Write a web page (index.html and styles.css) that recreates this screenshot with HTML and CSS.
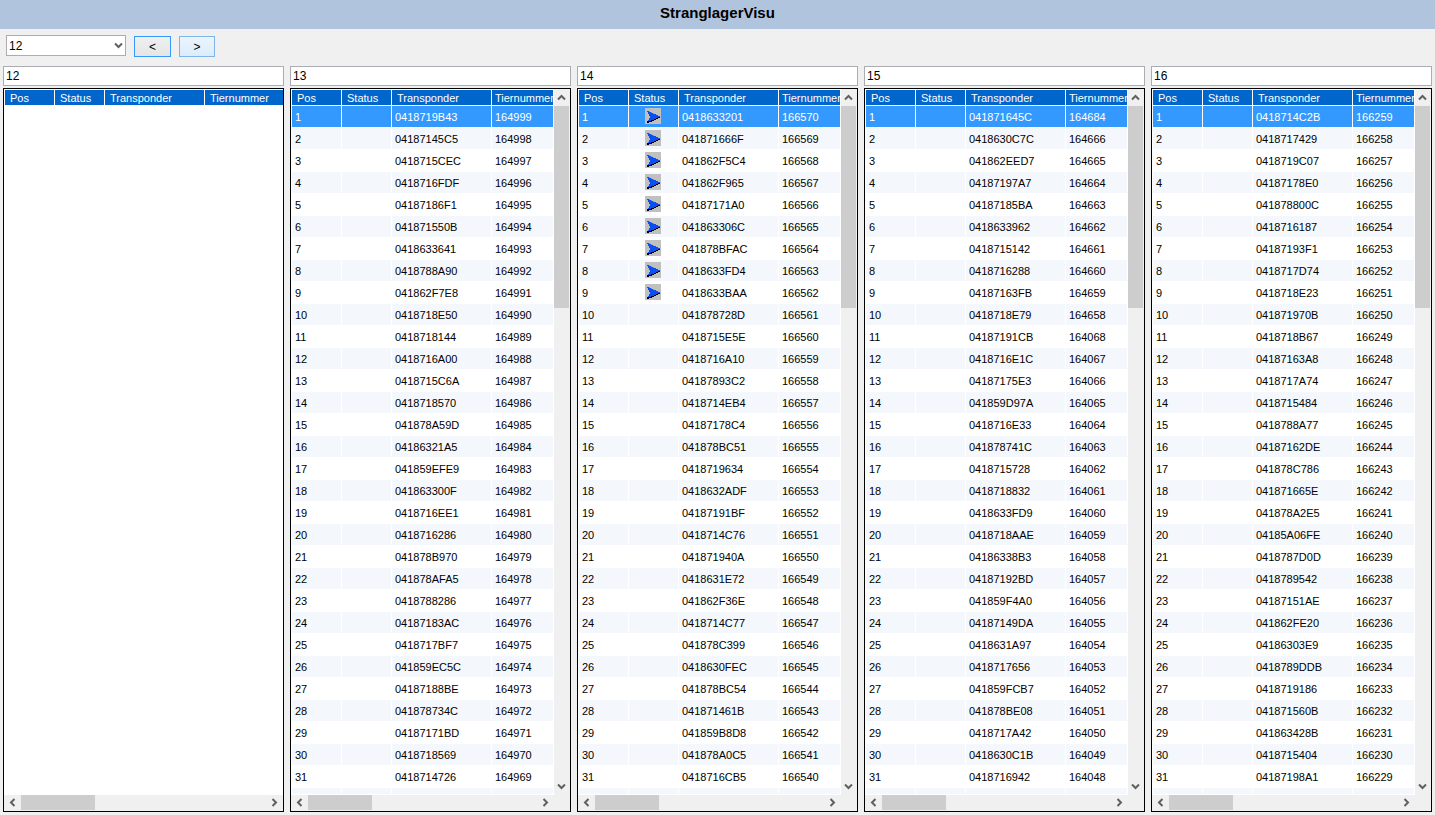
FILE: index.html
```html
<!DOCTYPE html>
<html lang="de">
<head>
<meta charset="utf-8">
<title>StranglagerVisu</title>
<link rel="stylesheet" href="styles.css">
</head>
<body>
<svg class="symbols" aria-hidden="true">
  <symbol id="up" viewBox="0 0 9 9"><path d="M1 6.5 4.5 3 8 6.5" fill="none" stroke="#606060" stroke-width="2"/></symbol>
  <symbol id="down" viewBox="0 0 9 9"><path d="M1 2.5 4.5 6 8 2.5" fill="none" stroke="#606060" stroke-width="2"/></symbol>
  <symbol id="left" viewBox="0 0 9 9"><path d="M6.5 1 3 4.5 6.5 8" fill="none" stroke="#606060" stroke-width="2"/></symbol>
  <symbol id="right" viewBox="0 0 9 9"><path d="M2.5 1 6 4.5 2.5 8" fill="none" stroke="#606060" stroke-width="2"/></symbol>
  <symbol id="arrow" viewBox="0 0 16 16">
    <path d="M0 0H16V16H0Z" fill="#c0c0c0"/>
    <path d="M2 3V4H3V6H4V8H5V10H4V12H3V13H2V15H4V14H7V13H9V12H11V11H13V10H15V9L3 3Z" fill="#000"/>
    <path d="M2 3H4V4H6V5H8V6H11V7H13V8H15V9H13V10H11V11H9V12H6V13H3V12H4V10H5V8H4V6H3V4H2Z" fill="#0a50f0"/>
  </symbol>
</svg>
<div class="app">
  <header class="titlebar"><h1 class="title">StranglagerVisu</h1></header>
  <nav class="toolbar">
    <div class="combo">
      <select class="combo-select" aria-label="Strang"><option>12</option><option>13</option><option>14</option><option>15</option><option>16</option></select>
      <svg class="combo-icon" aria-hidden="true"><use href="#down"/></svg>
    </div>
    <button class="step step-focus" type="button" aria-label="Zurück">&lt;</button>
    <button class="step step-hover" type="button" aria-label="Weiter">&gt;</button>
  </nav>
  <main class="lanes" id="lanes"></main>
</div>
<script src="app.js"></script>
</body>
</html>
```
FILE: styles.css
```css
* { box-sizing: border-box; }

body {
  margin: 0;
  background: #f0f0f0;
  color: #000;
  font-family: "Liberation Sans", Arial, sans-serif;
  font-size: 11px;
}

button, input, select { font: inherit; color: inherit; border-radius: 0; }

.symbols { display: none; }

.app { display: flex; flex-direction: column; height: 100vh; }

.titlebar { background: #b0c4de; padding-bottom: 3px; }
.title {
  margin: 0;
  font: bold 15px/26px "Liberation Sans", Arial, sans-serif;
  text-align: center;
}

.toolbar { display: flex; align-items: flex-end; gap: 8px; padding: 6px 6px 9px; }

.combo { display: grid; width: 120px; height: 22px; padding-bottom: 1px; }
.combo-select {
  grid-area: 1 / 1;
  appearance: none;
  width: 100%;
  height: 21px;
  padding: 0 2px;
  border: 1px solid #abadb3;
  background: #fff;
}
.combo-icon {
  grid-area: 1 / 1;
  place-self: center end;
  width: 9px;
  height: 9px;
  margin-right: 3px;
  pointer-events: none;
}

.step { width: 37px; height: 21px; padding: 0; border: 1px solid #39f; }
.step-focus { background: linear-gradient(#f0f0f0, #e5e5e5); }
.step-hover { width: 36px; border-color: #7eb4ea; background: linear-gradient(#ecf4fc, #dcecfc); }

.lanes {
  flex: 1;
  min-height: 0;
  display: grid;
  grid-template-columns: repeat(5, minmax(0, 1fr));
  grid-template-rows: minmax(0, 1fr);
  gap: 6px;
  padding: 0 3px 3px;
}

.lane { display: flex; flex-direction: column; gap: 2px; min-height: 0; }
.lane-name {
  width: 100%;
  height: 20px;
  padding: 0 2px;
  border: 1px solid #abadb3;
  background: #fff;
}
.combo-select, .lane-name, .step { font-size: 12px; }

.list {
  flex: 1;
  min-height: 0;
  display: grid;
  grid-template-columns: minmax(0, 1fr) auto;
  grid-template-rows: minmax(0, 1fr) 16px;
  border: 1px solid #000;
  background: #fff;
}

.view { overflow: hidden; padding: 1px 0 0 1px; border-bottom: 1px solid #fff; }

.table { width: 100%; table-layout: fixed; border-spacing: 0; }
.col-small { width: 50px; }
.col-wide { width: 100px; }
.table th, .table td {
  white-space: nowrap;
  text-align: left;
  font-weight: normal;
  border-right: 1px solid #fff;
  border-bottom: 1px solid #fff;
}
.table th { height: 16px; padding: 1px 0 0 5px; line-height: 14px; background: #06c; color: #fff; }
.table th:last-child { padding-left: 3px; }
.table td { height: 22px; padding: 1px 0 0 3px; line-height: 20px; }
.table tr:nth-child(even) td { background: #f4f8fd; }
.table tr.selected td { background: #39f; color: #fff; }
.table td.status { padding: 2px 16px 0; vertical-align: top; }
.status-icon { display: block; width: 16px; height: 16px; }
.list-empty .table th:last-child { border-right: 0; padding-left: 5px; }

.scroll { display: flex; background: #f0f0f0; }
.scroll-v { flex-direction: column; width: 16px; }
.scroll-corner { background: #f0f0f0; }
.scroll-button {
  flex: none;
  display: grid;
  place-items: center;
  width: 17px;
  height: 15px;
  padding: 0;
  border: 0;
  background: none;
}
.scroll-v .scroll-button { width: 15px; height: 17px; }
.scroll-icon { width: 9px; height: 9px; }
.track { flex: 1; }
.thumb { background: #cdcdcd; }
.scroll-h .thumb { width: 28%; height: 15px; }
.scroll-v .thumb { width: 15px; height: 30%; }
.list-empty .scroll-h .thumb { width: 30%; }
```
FILE: app.js
```js
const lanes = [
  { name: "12", codes: [], numbers: [] },
  { name: "13",
    codes: "0418719B43 04187145C5 0418715CEC 0418716FDF 04187186F1 041871550B 0418633641 0418788A90 041862F7E8 0418718E50 0418718144 0418716A00 0418715C6A 0418718570 041878A59D 04186321A5 041859EFE9 041863300F 0418716EE1 0418716286 041878B970 041878AFA5 0418788286 04187183AC 0418717BF7 041859EC5C 04187188BE 041878734C 04187171BD 0418718569 0418714726".split(" "),
    numbers: range(164999, 31) },
  { name: "14", flagged: 9,
    codes: "0418633201 041871666F 041862F5C4 041862F965 04187171A0 041863306C 041878BFAC 0418633FD4 0418633BAA 041878728D 0418715E5E 0418716A10 04187893C2 0418714EB4 04187178C4 041878BC51 0418719634 0418632ADF 04187191BF 0418714C76 041871940A 0418631E72 041862F36E 0418714C77 041878C399 0418630FEC 041878BC54 041871461B 041859B8D8 041878A0C5 0418716CB5".split(" "),
    numbers: range(166570, 31) },
  { name: "15",
    codes: "041871645C 0418630C7C 041862EED7 04187197A7 04187185BA 0418633962 0418715142 0418716288 04187163FB 0418718E79 04187191CB 0418716E1C 04187175E3 041859D97A 0418716E33 041878741C 0418715728 0418718832 0418633FD9 0418718AAE 04186338B3 04187192BD 041859F4A0 04187149DA 0418631A97 0418717656 041859FCB7 041878BE08 0418717A42 0418630C1B 0418716942".split(" "),
    numbers: [164684, ...range(164666, 9), ...range(164068, 21)] },
  { name: "16",
    codes: "0418714C2B 0418717429 0418719C07 04187178E0 041878800C 0418716187 04187193F1 0418717D74 0418718E23 041871970B 0418718B67 04187163A8 0418717A74 0418715484 0418788A77 04187162DE 041878C786 041871665E 041878A2E5 04185A06FE 0418787D0D 0418789542 04187151AE 041862FE20 04186303E9 0418789DDB 0418719186 041871560B 041863428B 0418715404 04187198A1".split(" "),
    numbers: range(166259, 31) }
];

// Descending run of animal numbers.
function range(start, count) {
  return Array.from({ length: count }, (_, i) => start - i);
}

function scrollButton(icon, label) {
  return `<button class="scroll-button" type="button" tabindex="-1" aria-label="${label}"><svg class="scroll-icon"><use href="#${icon}"/></svg></button>`;
}

function scrollbar(kind, first, firstLabel, last, lastLabel) {
  return `<div class="scroll scroll-${kind}">${scrollButton(first, firstLabel)}<div class="track"><div class="thumb"></div></div>${scrollButton(last, lastLabel)}</div>`;
}

function row(lane, code, i) {
  const icon = i < (lane.flagged || 0) ? '<svg class="status-icon" role="img" aria-label="aktiv"><use href="#arrow"/></svg>' : "";
  return `<tr${i === 0 ? ' class="selected"' : ""}><td>${i + 1}</td><td class="status">${icon}</td><td>${code}</td><td>${lane.numbers[i]}</td></tr>`;
}

function section(lane) {
  const empty = lane.codes.length === 0;
  // One blank line follows the loaded records.
  const rows = empty ? "" : lane.codes.map((c, i) => row(lane, c, i)).join("") + "<tr><td></td><td></td><td></td><td></td></tr>";
  return `<section class="lane">
    <input class="lane-name" type="text" aria-label="Strang ${lane.name}" value="${lane.name}">
    <div class="list${empty ? " list-empty" : ""}">
      <div class="view"><table class="table">
        <colgroup><col class="col-small"><col class="col-small"><col class="col-wide"><col></colgroup>
        <thead><tr><th>Pos</th><th>Status</th><th>Transponder</th><th>Tiernummer</th></tr></thead>
        <tbody>${rows}</tbody>
      </table></div>
      ${empty ? "<div></div>" : scrollbar("v", "up", "Nach oben", "down", "Nach unten")}
      ${scrollbar("h", "left", "Nach links", "right", "Nach rechts")}
      <div class="scroll-corner"></div>
    </div>
  </section>`;
}

document.getElementById("lanes").innerHTML = lanes.map(section).join("");
```
